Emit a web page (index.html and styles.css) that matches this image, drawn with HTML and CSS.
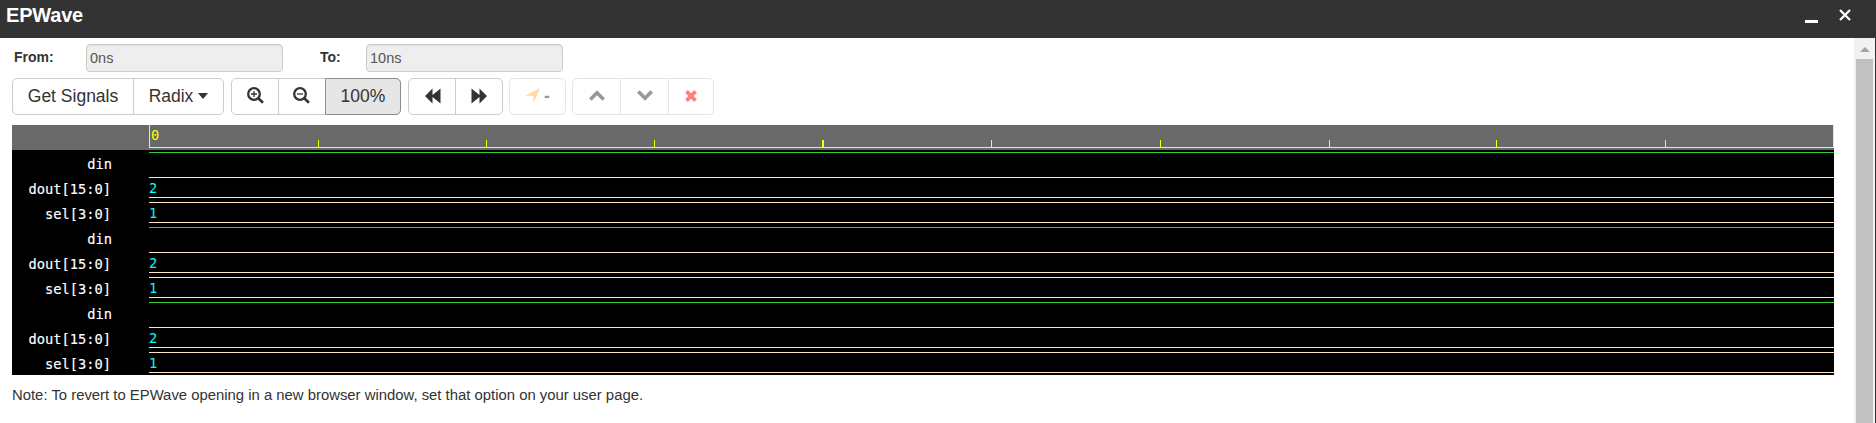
FILE: index.html
```
<!DOCTYPE html>
<html lang="en">
<head>
<meta charset="utf-8">
<title>EPWave</title>
<link rel="stylesheet" href="styles.css">
</head>
<body>
<header class="titlebar">
  <h1 class="title">EPWave</h1>
  <div class="window-actions">
    <svg class="min" width="13" height="3" viewBox="0 0 13 3"><path d="M0 0h13v3H0z" fill="#fff"/></svg>
    <svg width="12" height="12" viewBox="0 0 12 12"><path d="M1 1l10 10M11 1L1 11" stroke="#fff" stroke-width="2.3"/></svg>
  </div>
</header>
<div class="body">
  <main class="content">
    <form class="range">
      <label class="from">From:</label><div class="field">0ns</div>
      <label class="to">To:</label><div class="field">10ns</div>
    </form>
    <div class="toolbar">
      <div class="group">
        <button type="button" class="btn w-get">Get Signals</button>
        <button type="button" class="btn w-radix">Radix<span class="caret"></span></button>
      </div>
      <div class="group">
        <button type="button" class="btn w-zin"><svg width="17" height="17" viewBox="0 0 17 17" fill="none" stroke="#333"><circle cx="7" cy="7" r="5.800" stroke-width="2.300"/><path d="M11.300 11.300l4.700 4.500" stroke-width="2.600"/><path d="M4 7h6M7 4v6" stroke-width="1.300"/></svg></button>
        <button type="button" class="btn w-zout"><svg width="17" height="17" viewBox="0 0 17 17" fill="none" stroke="#333"><circle cx="7" cy="7" r="5.800" stroke-width="2.300"/><path d="M11.300 11.300l4.700 4.500" stroke-width="2.600"/><path d="M4 7h6" stroke-width="1.300"/></svg></button>
        <button type="button" class="btn active w-full">100%</button>
      </div>
      <div class="group g-step">
        <button type="button" class="btn w-back"><svg width="16" height="16" viewBox="0 0 16 16" fill="#333"><path d="M0 8L7.500 .5v6.500L15.500 .5v15L7.500 9v6.500z"/></svg></button>
        <button type="button" class="btn w-fwd"><svg width="16" height="16" viewBox="0 0 16 16" fill="#333"><path d="M16 8L8.500 .5v6.500L.5 .5v15L8.500 9v6.500z"/></svg></button>
      </div>
      <div class="group faded">
        <button type="button" class="btn w-cur"><svg width="15" height="15" viewBox="0 0 15 15" fill="#ffa500" opacity=".8"><path d="M14.900 .2L8.600 14.800V7.700H.2z"/></svg><span class="dash">-</span></button>
      </div>
      <div class="group faded">
        <button type="button" class="btn w-up"><svg width="16" height="11" viewBox="0 0 16 11" fill="none" stroke="#333" stroke-width="3.600"><path d="M1.300 9.500L8 2.800l6.700 6.700"/></svg></button>
        <button type="button" class="btn w-down"><svg width="16" height="11" viewBox="0 0 16 11" fill="none" stroke="#333" stroke-width="3.600"><path d="M1.300 1.500L8 8.200l6.700-6.700"/></svg></button>
        <button type="button" class="btn w-del"><svg width="12" height="12" viewBox="0 0 12 12" fill="none" stroke="#f00" stroke-width="3.800"><path d="M1.400 1.400l9.200 9.200M10.600 1.400l-9.200 9.200"/></svg></button>
      </div>
    </div>
    <section class="wave">
      <div class="ruler"><div class="scale"><span class="zero">0</span>
        <svg class="ticks" width="1685" height="8" viewBox="0 0 1685 8" fill="#ff0" shape-rendering="crispEdges"><path d="M169 1h1v7h-1zM337 1h1v7h-1zM505 1h1v7h-1zM673 1h2v7h-2zM842 1h1v7h-1zM1011 1h1v7h-1zM1180 1h1v7h-1zM1347 1h1v7h-1zM1516 1h1v7h-1z"/></svg>
      </div></div>
      <div class="signal"><span class="name bit-name">din</span><div class="trace bit"></div></div>
      <div class="signal"><span class="name">dout[15:0]</span><div class="trace bus"><span>2</span></div></div>
      <div class="signal"><span class="name">sel[3:0]</span><div class="trace bus"><span>1</span></div></div>
      <div class="signal"><span class="name bit-name">din</span><div class="trace bit"></div></div>
      <div class="signal"><span class="name">dout[15:0]</span><div class="trace bus"><span>2</span></div></div>
      <div class="signal"><span class="name">sel[3:0]</span><div class="trace bus"><span>1</span></div></div>
      <div class="signal"><span class="name bit-name">din</span><div class="trace bit"></div></div>
      <div class="signal"><span class="name">dout[15:0]</span><div class="trace bus"><span>2</span></div></div>
      <div class="signal"><span class="name">sel[3:0]</span><div class="trace bus"><span>1</span></div></div>
    </section>
    <p class="note">Note: To revert to EPWave opening in a new browser window, set that option on your user page.</p>
  </main>
  <div class="scrollbar"><div class="arrow"></div><div class="thumb"></div></div>
</div>
</body>
</html>
```
FILE: styles.css
```
* { box-sizing: border-box; }
body {
  margin: 0;
  width: 1876px;
  height: 423px;
  overflow: hidden;
  background: #fff;
  border-right: 1px solid #333;
  color: #333;
  font: 14px/20px "Liberation Sans", Arial, sans-serif;
}
svg { display: block; flex: none; }
.titlebar {
  height: 38px;
  background: #333;
  display: flex;
  justify-content: space-between;
  padding-left: 6px;
  padding-right: 24px;
}
.title { margin: 0; padding-top: 3px; font-size: 20px; line-height: 24px; color: #fff; letter-spacing: -0.2px; }
.window-actions { display: flex; gap: 21px; padding-top: 9px; }
.min { margin-top: 11px; }
.body { display: flex; height: 385px; }
.content { flex: 1; padding: 6px 0 0 12px; }
.range { display: flex; height: 28px; }
.range label { font-weight: bold; line-height: 26px; color: #333; }
.from { width: 74px; padding-left: 2px; }
.to { width: 83px; padding-left: 37px; }
.field {
  width: 197px;
  height: 28px;
  padding-left: 3px;
  border: 1px solid #ccc;
  border-radius: 4px;
  background: #eee;
  box-shadow: inset 0 1px 1px rgba(0, 0, 0, .075);
  color: #555;
  font-size: 14.5px;
  line-height: 26px;
}
.toolbar { display: flex; margin-top: 6px; height: 37px; }
.group { display: flex; border: 1px solid #ccc; border-radius: 5px; margin-right: 7px; }
.g-step, .faded { margin-right: 6px; }
.faded { opacity: .5; }
.btn {
  display: flex;
  align-items: center;
  justify-content: center;
  padding: 0 0 2px;
  margin: 0;
  border: 0;
  background: transparent;
  color: #333;
  font: 17.5px/20px "Liberation Sans", Arial, sans-serif;
}
.btn + .btn { border-left: 1px solid #ccc; }
.btn.active {
  margin: -1px -1px -1px 0;
  border: 1px solid #8c8c8c;
  border-radius: 0 5px 5px 0;
  background: #e6e6e6;
}
.w-get { width: 120px; }
.w-radix { width: 90px; }
.caret { margin-left: 5px; border: 5.5px solid transparent; border-top: 6px solid #333; border-bottom: 0; }
.w-zin { width: 46px; }
.w-zout { width: 47px; padding-right: 1px; }
.w-full { width: 76px; }
.w-back { width: 46px; padding-left: 2px; }
.w-fwd { width: 47px; padding-right: 1px; }
.w-cur { width: 55px; }
.dash { margin-left: 4px; font-weight: bold; }
.w-up { width: 47px; }
.w-down { width: 48px; }
.w-del { width: 45px; }
.wave {
  width: 1822px;
  height: 250px;
  margin-top: 10px;
  background: #000;
  color: #fff;
  font: 13.7px/25px "DejaVu Sans Mono", monospace;
}
.ruler { height: 25px; padding-left: 137px; background: #696969; }
.scale {
  height: 23px;
  border: solid #ff0;
  border-width: 0 1px 1px;
  display: flex;
  flex-direction: column;
  justify-content: space-between;
  color: #ff0;
}
.zero { height: 14px; line-height: 20px; padding-left: 1px; }
.ticks { margin-left: -1px; width: 1685px; }
.signal { display: flex; height: 25px; }
.name {
  width: 137px;
  padding-right: 38px;
  padding-top: 2px;
  text-align: right;
  white-space: nowrap;
  -webkit-text-stroke: .15px #fff;
}
.bit-name { padding-right: 37px; }
.trace { flex: 1; margin-top: 2px; }
.bit { border-top: 1px solid #32cd32; }
.bus { height: 21px; border: solid #ffe4c4; border-width: 1px 0; color: #0ff; line-height: 21px; }
.bus span { display: block; }
.note { margin: 10px 0 0; font-size: 14.87px; }
.scrollbar { width: 21px; background: #f1f1f1; }
.arrow { width: 0; margin: 9px 0 7px 6px; border: 5px solid transparent; border-bottom: 5px solid #a3a3a3; border-top: 0; }
.thumb { width: 17px; height: 364px; margin-left: 2px; background: #c1c1c1; }
```
